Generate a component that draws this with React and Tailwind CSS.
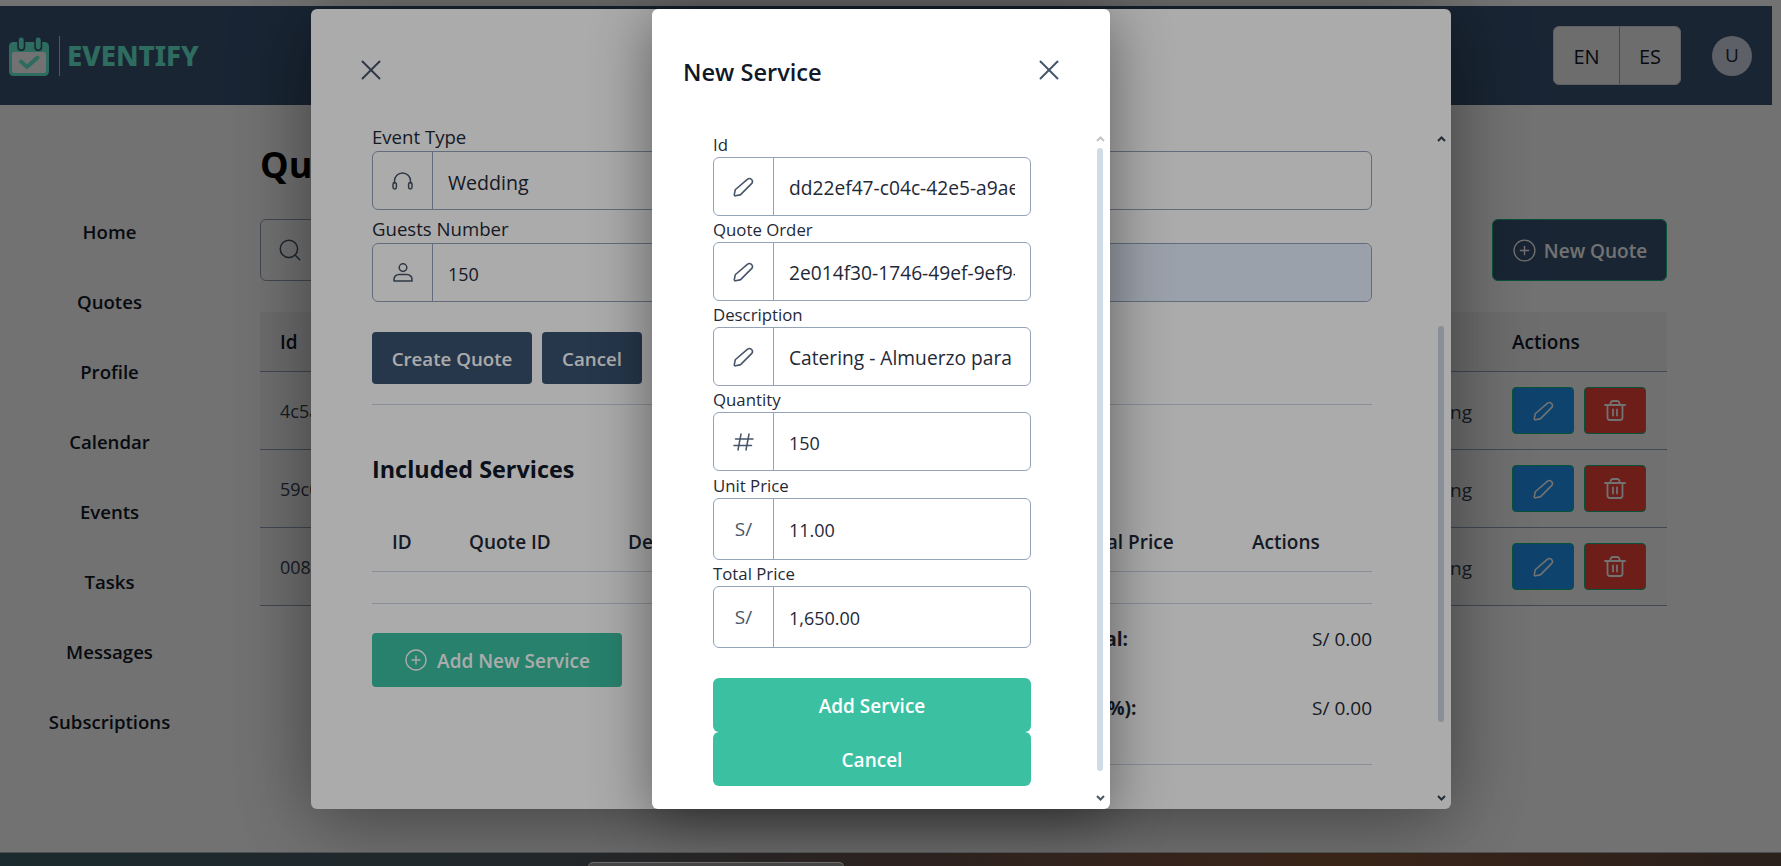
import React from "react";
import { X, CirclePlus, Search } from "lucide-react";

const FONT = "font-['Open_Sans','Noto_Sans',sans-serif]";

function Logo() {
  return (
    <svg width="40" height="40" viewBox="0 0 40 40" fill="none">
      <rect x="0" y="6" width="40" height="34" rx="4.5" fill="#6af0d6" />
      <rect x="3" y="16" width="34" height="21" rx="2" fill="#ffffff" />
      <rect x="9" y="0.8" width="6.5" height="13.5" rx="3.2" fill="#6af0d6" stroke="#3a5474" strokeWidth="1.6" />
      <rect x="26" y="0.8" width="6.5" height="13.5" rx="3.2" fill="#6af0d6" stroke="#3a5474" strokeWidth="1.6" />
      <path d="M12 25.5l6 5.5 10.5-9.5" stroke="#6af0d6" strokeWidth="4" strokeLinecap="round" strokeLinejoin="round" />
    </svg>
  );
}

function PencilIcon() {
  return (
    <svg width="21" height="20" viewBox="0 0 21 20" fill="none" stroke="currentColor" strokeWidth="1.6" strokeLinejoin="round">
      <path d="M14.6 2.2a3 3 0 0 1 4.2 4.2L7.6 17.6a1.2 1.2 0 0 1-.6.3l-4.5.9a1 1 0 0 1-1.2-1.2l.9-4.5c0-.2.1-.4.3-.6z" />
    </svg>
  );
}

function TrashIcon() {
  return (
    <svg width="22" height="21" viewBox="0 0 22 21" fill="none" stroke="currentColor" strokeWidth="1.8" strokeLinecap="round">
      <path d="M1 5h20" />
      <path d="M6.5 5V3.5A2.5 2.5 0 0 1 9 1h4a2.5 2.5 0 0 1 2.5 2.5V5" />
      <path d="M3.5 5v12.5A2.5 2.5 0 0 0 6 20h10a2.5 2.5 0 0 0 2.5-2.5V5" />
      <path d="M9 9.5v6M13 9.5v6" />
    </svg>
  );
}

function HeadphonesIcon() {
  return (
    <svg width="21" height="18" viewBox="0 0 21 18" fill="none" stroke="currentColor" strokeWidth="1.5" strokeLinecap="round">
      <path d="M2.5 11V9a8 8 0 0 1 16 0v2" />
      <rect x="1" y="10.5" width="3.4" height="6.5" rx="1.7" />
      <rect x="16.6" y="10.5" width="3.4" height="6.5" rx="1.7" />
    </svg>
  );
}

function UserIcon() {
  return (
    <svg width="20" height="19" viewBox="0 0 20 19" fill="none" stroke="currentColor" strokeWidth="1.5" strokeLinecap="round">
      <circle cx="10" cy="4.6" r="3.8" />
      <path d="M1 18v-1.6a5 5 0 0 1 5-5h8a5 5 0 0 1 5 5V18H1" />
    </svg>
  );
}

function HashIcon() {
  return (
    <svg width="21" height="18" viewBox="0 0 21 18" fill="none" stroke="currentColor" strokeWidth="1.5" strokeLinecap="round">
      <path d="M8 1L5 17M16 1l-3 16M2.5 6H20M1 12.5h17.5" />
    </svg>
  );
}

function Arrow({ up, className }) {
  return (
    <svg width="9" height="6" viewBox="0 0 9 6" fill="none" stroke="currentColor" strokeWidth="2" className={className}>
      <path d={up ? "M1 5l3.5-3.5L8 5" : "M1 1l3.5 3.5L8 1"} />
    </svg>
  );
}

function Field({ label, icon, value, h = "h-[59px]", num, gapFix }) {
  return (
    <div className={`flex flex-col ${gapFix ? "mt-[1px]" : ""}`}>
      <label className="h-[26px] text-[16.8px] leading-[27px] text-[#1f2937]">{label}</label>
      <div className={`flex ${h} w-[318px] rounded-md border border-[#94a3b8] bg-white`}>
        <div className="flex w-[60px] shrink-0 items-center justify-center border-r border-[#94a3b8] text-[19px] text-[#475569]">{icon}</div>
        <div className={`flex min-w-0 flex-1 items-center px-[15px] pt-[3px] text-[#1f2937] ${num ? "text-[18px]" : "text-[19.2px]"}`}>
          <span className="block overflow-hidden whitespace-nowrap">{value}</span>
        </div>
      </div>
    </div>
  );
}

function Scrollbar({ top, bottom, thumbTop, thumbBottom, thumb, upColor, downColor }) {
  return (
    <>
      <div className="absolute right-[5px]" style={{ top }}><Arrow up className={upColor} /></div>
      <div className={`absolute right-[7px] w-[6px] rounded-full ${thumb}`} style={{ top: thumbTop, height: thumbBottom - thumbTop }} />
      <div className="absolute right-[5px]" style={{ top: bottom }}><Arrow className={downColor} /></div>
    </>
  );
}

function Row({ id }) {
  return (
    <div className="flex h-[78px] items-center justify-between border-b border-[#94a3b8] bg-[#f9fafb] pl-5 pr-[21px] text-[18px] text-[#374151]">
      <span className="pt-[1px]">{id}</span>
      <div className="flex items-center gap-[40px]">
        <span className="pt-[3px] text-[19px]">Pending</span>
        <div className="flex gap-[10px]">
          <button className="flex h-[47px] w-[62px] items-center justify-center rounded border border-[#10b981] bg-[#2196f3] text-white"><PencilIcon /></button>
          <button className="flex h-[47px] w-[62px] items-center justify-center rounded border border-[#10b981] bg-[#f44336] text-white"><TrashIcon /></button>
        </div>
      </div>
    </div>
  );
}

export default function App() {
  return (
    <div className={`relative h-[866px] w-[1781px] overflow-hidden bg-white ${FONT}`}>
      <div className="h-[6px]" />
      <header className="flex h-[99px] w-[1772px] items-center justify-between bg-[#3a5474] pl-[9px] pr-[20px]">
        <div className="flex items-center">
          <Logo />
          <div className="ml-[10px] mr-[7px] h-[40px] w-px bg-[#6af0d6]" />
          <span className="font-['Noto_Sans',sans-serif] text-[27.5px] font-extrabold text-[#6af0d6]">EVENTIFY</span>
        </div>
        <div className="flex items-center gap-[31px]">
          <div className="flex h-[59px] w-[128px] rounded-md border border-[#d1d5db] bg-[#f3f4f6] text-[20px] font-medium text-[#0f172a]">
            <span className="flex w-[66px] items-center justify-center border-r border-[#9ca3af] pt-[2px]">EN</span>
            <span className="flex flex-1 items-center justify-center pt-[2px]">ES</span>
          </div>
          <div className="flex h-10 w-10 items-center justify-center rounded-full bg-[#cfd6e6] text-[19px] text-[#1f2937]">U</div>
        </div>
      </header>

      <div className="flex">
        <nav className="w-[219px] shrink-0 pt-[92px]">
          {["Home", "Quotes", "Profile", "Calendar", "Events", "Tasks", "Messages", "Subscriptions"].map((n) => (
            <div key={n} className="flex h-[70px] items-center justify-center text-[18.6px] font-semibold text-[#111827]">{n}</div>
          ))}
        </nav>
        <main className="ml-[41px] w-[1407px] pt-[33px]">
          <h1 className="text-[36px] font-bold leading-[54px] text-black">Quotes</h1>
          <div className="mt-[27px] flex h-[62px] items-center justify-between">
            <div className="flex h-full w-[1100px] items-center rounded-md border border-[#94a3b8] pl-4 text-[#475569]"><Search size={26} strokeWidth={1.4} /></div>
            <button className="flex h-full w-[175px] items-center justify-center gap-[7px] rounded-md border border-[#10b981] bg-[#3a5474] text-[19px] font-semibold text-white"><CirclePlus size={25} strokeWidth={1.3} /><span className="pt-[2px]">New Quote</span></button>
          </div>
          <div className="mt-[31px]">
            <div className="flex h-[60px] items-center justify-between border-b border-[#94a3b8] bg-[#f3f4f6] pl-5 pt-[2px] text-[19px] font-semibold text-[#111827]">
              <span>Id</span>
              <span className="w-[155px]">Actions</span>
            </div>
            <Row id="4c5a1d3e" />
            <Row id="59c0e7b2" />
            <Row id="008f4a6c" />
          </div>
        </main>
      </div>

      {/* first overlay */}
      <div className="absolute inset-0 bg-black/[.33]" />

      {/* quote modal */}
      <div className="absolute left-[311px] top-[9px] h-[800px] w-[1140px] overflow-hidden rounded-md bg-white shadow-[0_10px_80px_rgba(0,0,0,0.45)]">
        <Scrollbar top={127} bottom={786} thumbTop={317} thumbBottom={713} thumb="bg-[#cbd5e1]" upColor="text-[#374151]" downColor="text-[#374151]" />
        <div className="pl-[61px] pr-[79px] pt-[44px]">
          <X size={34} strokeWidth={1.35} className="-ml-[18px] text-[#475569]" />
          <div className="mt-[38px] h-[26px] text-[18.6px] leading-[24px] text-[#1f2937]">Event Type</div>
          <div className="flex h-[59px] rounded-md border border-[#94a3b8]">
            <div className="flex w-[60px] items-center justify-center border-r border-[#94a3b8] text-[#475569]"><HeadphonesIcon /></div>
            <div className="flex items-center pl-[15px] pt-[4px] text-[19.6px] text-[#1f2937]">Wedding</div>
          </div>
          <div className="mt-[7px] h-[26px] text-[18.6px] leading-[24px] text-[#1f2937]">Guests Number</div>
          <div className="flex h-[59px] rounded-md border border-[#94a3b8]">
            <div className="flex w-[60px] items-center justify-center border-r border-[#94a3b8] text-[#475569]"><UserIcon /></div>
            <div className="flex flex-1 items-center pl-[15px] pt-[4px] text-[18px] text-[#1f2937]">150</div>
            <div className="w-[261px] rounded-r-md bg-[#e8f0fe]" />
          </div>
          <div className="mt-[30px] flex gap-[10px]">
            <button className="h-[52px] w-[160px] rounded bg-[#3a5170] pt-[2px] text-[18.7px] font-semibold text-white">Create Quote</button>
            <button className="h-[52px] w-[100px] rounded bg-[#3a5170] pt-[2px] text-[18.7px] font-semibold text-white">Cancel</button>
          </div>
          <div className="mt-[20px] border-t border-[#cbd5e1]" />
          <h3 className="mt-[46px] text-[23.4px] font-bold leading-[36px] text-[#111827]">Included Services</h3>
          <div className="mt-[25px] flex h-[60px] items-center border-b border-[#cbd5e1] pt-[2px] text-[19px] font-semibold text-[#1f2937]">
            <span className="ml-5 w-[77px]">ID</span>
            <span className="w-[159px]">Quote ID</span>
            <span className="w-[449px]">Description</span>
            <span className="w-[175px] whitespace-nowrap">Total Price</span>
            <span>Actions</span>
          </div>
          <div className="h-[32px] border-b border-[#cbd5e1]" />
          <div className="mt-[29px] flex items-start justify-between">
            <button className="flex h-[54px] w-[250px] items-center justify-center gap-[9px] rounded bg-[#3bc1a2] text-[19px] font-semibold text-white"><CirclePlus size={24} strokeWidth={1.35} /><span className="pt-[3px]">Add New Service</span></button>
            <div className="-mt-[8px] w-[330px] text-[19px] text-[#1f2937]">
              <div className="flex h-[69px] justify-between"><span className="font-bold">Subtotal:</span><span>S/ 0.00</span></div>
              <div className="flex h-[70px] justify-between"><span className="font-bold">IGV (18%):</span><span>S/ 0.00</span></div>
              <div className="border-t border-[#cbd5e1]" />
            </div>
          </div>
        </div>
      </div>

      {/* second overlay */}
      <div className="absolute inset-0 bg-black/[.33]" />

      {/* service modal */}
      <div className="absolute left-[652px] top-[9px] h-[800px] w-[458px] overflow-hidden rounded-md bg-white shadow-[0_10px_60px_rgba(0,0,0,0.45)]">
        <Scrollbar top={127} bottom={786} thumbTop={139} thumbBottom={762} thumb="bg-[#d1dbe5]" upColor="text-[#c4c4c4]" downColor="text-[#4b5563]" />
        <div className="flex items-center justify-between pl-[31px] pr-[44px] pt-[45px]">
          <h2 className="text-[23.6px] font-semibold leading-[36px] text-[#111827]">New Service</h2>
          <X size={34} strokeWidth={1.35} className="-translate-y-[2px] text-[#475569]" />
        </div>
        <div className="ml-[61px] mt-[41px] flex flex-col">
          <Field label="Id" icon={<PencilIcon />} value="dd22ef47-c04c-42e5-a9ae-3f7b" />
          <Field label="Quote Order" icon={<PencilIcon />} value="2e014f30-1746-49ef-9ef9-1a2c" />
          <Field label="Description" icon={<PencilIcon />} value="Catering - Almuerzo para 150" />
          <Field label="Quantity" icon={<HashIcon />} value="150" num />
          <Field label="Unit Price" icon="S/" value="11.00" h="h-[62px]" num gapFix />
          <Field label="Total Price" icon="S/" value="1,650.00" h="h-[62px]" num />
          <button className="mt-[30px] h-[54px] w-[318px] rounded-md bg-[#3bc1a2] pt-[2px] text-[19px] font-semibold text-white">Add Service</button>
          <button className="h-[54px] w-[318px] rounded-md bg-[#3bc1a2] pt-[2px] text-[19px] font-semibold text-white">Cancel</button>
        </div>
      </div>

      {/* strip of the desktop under the window */}
      <div className="absolute bottom-0 left-0 right-0 h-[14px] border-t border-[#4b4f50] bg-[linear-gradient(90deg,#1b2a2e,#22272a_30%,#2c2220_50%,#3a2418_75%,#2a201c)]">
        <div className="absolute left-[588px] top-[9px] h-[5px] w-[256px] rounded-t-[6px] border border-b-0 border-[#6b6b6b] bg-[#444444]" />
      </div>
    </div>
  );
}
